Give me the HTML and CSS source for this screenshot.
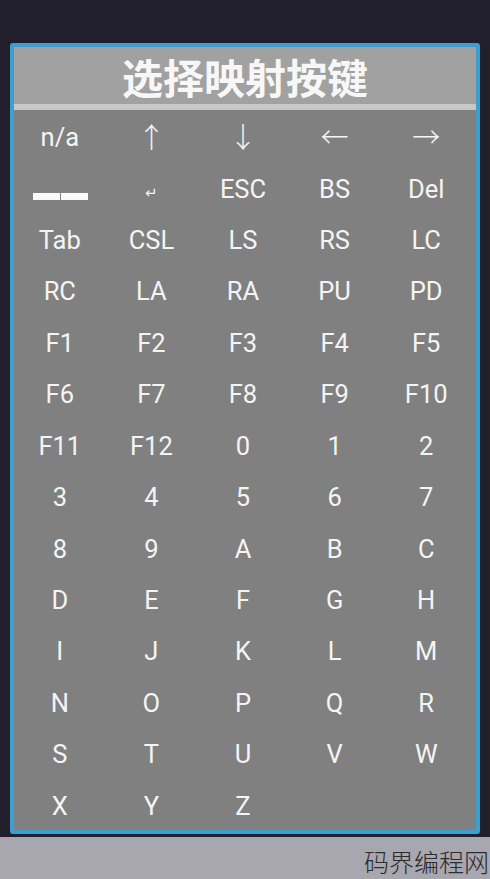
FILE: index.html
```html
<!DOCTYPE html>
<html lang="zh">
<head>
<meta charset="utf-8">
<link rel="stylesheet" href="styles.css">
</head>
<body>
<div class="screen">
  <div class="top"></div>
  <div class="dialog">
    <div class="title">选择映射按键</div>
    <div class="sep"></div>
    <div class="grid">
      <div class="key">n/a</div>
      <div class="key arrow">↑</div>
      <div class="key arrow">↓</div>
      <div class="key arrow">←</div>
      <div class="key arrow">→</div>
      <div class="key"><span class="space"><span class="bar"></span><span class="bar"></span></span></div>
      <div class="key enter">↵</div>
      <div class="key">ESC</div>
      <div class="key">BS</div>
      <div class="key">Del</div>
      <div class="key">Tab</div>
      <div class="key">CSL</div>
      <div class="key">LS</div>
      <div class="key">RS</div>
      <div class="key">LC</div>
      <div class="key">RC</div>
      <div class="key">LA</div>
      <div class="key">RA</div>
      <div class="key">PU</div>
      <div class="key">PD</div>
      <div class="key">F1</div>
      <div class="key">F2</div>
      <div class="key">F3</div>
      <div class="key">F4</div>
      <div class="key">F5</div>
      <div class="key">F6</div>
      <div class="key">F7</div>
      <div class="key">F8</div>
      <div class="key">F9</div>
      <div class="key">F10</div>
      <div class="key">F11</div>
      <div class="key">F12</div>
      <div class="key">0</div>
      <div class="key">1</div>
      <div class="key">2</div>
      <div class="key">3</div>
      <div class="key">4</div>
      <div class="key">5</div>
      <div class="key">6</div>
      <div class="key">7</div>
      <div class="key">8</div>
      <div class="key">9</div>
      <div class="key">A</div>
      <div class="key">B</div>
      <div class="key">C</div>
      <div class="key">D</div>
      <div class="key">E</div>
      <div class="key">F</div>
      <div class="key">G</div>
      <div class="key">H</div>
      <div class="key">I</div>
      <div class="key">J</div>
      <div class="key">K</div>
      <div class="key">L</div>
      <div class="key">M</div>
      <div class="key">N</div>
      <div class="key">O</div>
      <div class="key">P</div>
      <div class="key">Q</div>
      <div class="key">R</div>
      <div class="key">S</div>
      <div class="key">T</div>
      <div class="key">U</div>
      <div class="key">V</div>
      <div class="key">W</div>
      <div class="key">X</div>
      <div class="key">Y</div>
      <div class="key">Z</div>
    </div>
  </div>
  <div class="gap"></div>
  <div class="bottom">
    <div class="watermark">码界编程网</div>
  </div>
</div>
</body>
</html>
```
FILE: styles.css
```css
html, body {
  margin: 0;
  padding: 0;
}
body {
  background: #211f2c;
  font-family: Roboto, "Noto Sans", "Noto Sans CJK SC", sans-serif;
}
.screen {
  width: 490px;
  height: 879px;
  display: flex;
  flex-direction: column;
  overflow: hidden;
}
.top {
  height: 43px;
  flex: none;
}
.dialog {
  margin: 0 10px;
  border: 4px solid #3b9fcf;
  border-radius: 3px;
  display: flex;
  flex-direction: column;
  background: #808080;
  box-shadow: 0 0 2px #14324a;
}
.title {
  height: 57px;
  background: #a1a1a1;
  color: #f7f7f7;
  font-family: "Noto Sans CJK SC", sans-serif;
  font-weight: 700;
  font-size: 41px;
  line-height: 59px;
  text-align: center;
}
.sep {
  height: 6px;
  background: #c8c8c8;
}
.grid {
  display: grid;
  grid-template-columns: repeat(5, 1fr);
  grid-auto-rows: 51.43px;
  padding-right: 4px;
}
.key {
  display: flex;
  align-items: center;
  justify-content: center;
  color: #f4f4f4;
  font-size: 25.5px;
  padding-top: 3px;
}
.arrow {
  font-family: "Noto Sans CJK SC", sans-serif;
  font-weight: 300;
  font-size: 28px;
  padding-top: 0;
  padding-bottom: 0;
}
.enter {
  font-family: "DejaVu Sans", sans-serif;
  font-size: 15px;
  padding-top: 12px;
}
.space {
  display: flex;
  gap: 1px;
  margin-top: 15px;
  margin-right: -1px;
}
.bar {
  width: 27px;
  height: 7px;
  background: #fafafa;
}
.gap {
  height: 3px;
  flex: none;
}
.bottom {
  flex: 1;
  background: #a8a7b0;
  display: flex;
  justify-content: flex-end;
  align-items: center;
  padding-top: 6px;
}
.watermark {
  font-family: "Noto Sans CJK SC", sans-serif;
  font-weight: 300;
  font-size: 25px;
  color: #2b2b30;
  margin-right: 1px;
}
```
